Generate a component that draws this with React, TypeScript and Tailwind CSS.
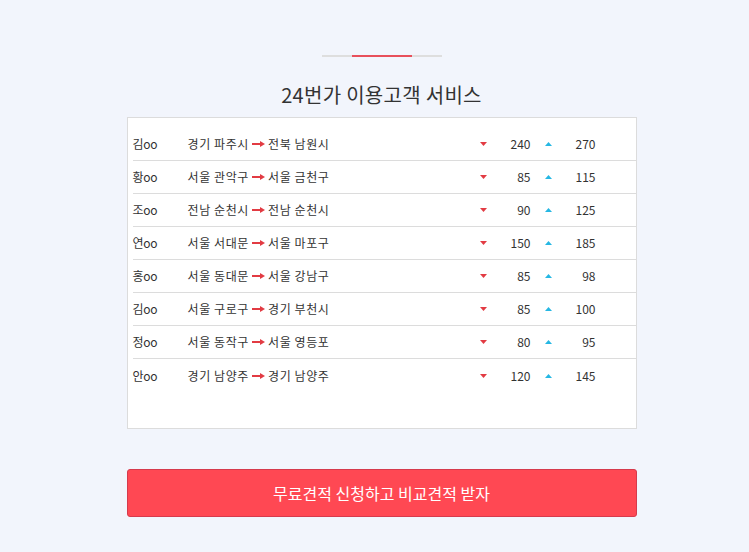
const rows = [
  { name: '김oo', from: '경기 파주시', to: '전북 남원시', low: 240, high: 270 },
  { name: '황oo', from: '서울 관악구', to: '서울 금천구', low: 85, high: 115 },
  { name: '조oo', from: '전남 순천시', to: '전남 순천시', low: 90, high: 125 },
  { name: '연oo', from: '서울 서대문', to: '서울 마포구', low: 150, high: 185 },
  { name: '홍oo', from: '서울 동대문', to: '서울 강남구', low: 85, high: 98 },
  { name: '김oo', from: '서울 구로구', to: '경기 부천시', low: 85, high: 100 },
  { name: '정oo', from: '서울 동작구', to: '서울 영등포', low: 80, high: 95 },
  { name: '안oo', from: '경기 남양주', to: '경기 남양주', low: 120, high: 145 },
];

function RouteArrow() {
  return (
    <svg width="13" height="8" viewBox="0 0 13 8" className="ml-[3px] mr-[3px] shrink-0">
      <line x1="0" y1="4" x2="9" y2="4" stroke="#e23b43" strokeWidth="2" />
      <polygon points="8,1 13,4 8,7" fill="#e23b43" />
    </svg>
  );
}

export default function App() {
  return (
    <div
      className="min-h-[552px] w-full bg-[#f2f5fc] flex flex-col items-center pl-[14px] text-[#333]"
      style={{ fontFamily: '"Noto Sans CJK KR", "Noto Sans", sans-serif' }}
    >
      {/* Divider */}
      <div className="mt-[55px] w-[120px] h-[2px] bg-[#dedede] flex justify-center">
        <div className="w-[60px] h-[2px] bg-[#e8505b]" />
      </div>

      <h2 className="mt-[24px] text-[20px] leading-[28px] tracking-[0.3px] text-[#333]">24번가 이용고객 서비스</h2>

      {/* List */}
      <div className="mt-[8px] w-[510px] h-[312px] bg-white border border-[#dcdcdc] pt-[10px] pl-[5px]">
        {rows.map((r, i) => (
          <div
            key={i}
            className={`flex items-center h-[33px] text-[12px] ${i < rows.length - 1 ? 'border-b border-[#dcdcdc]' : ''}`}
          >
            <div className="w-[55px] tracking-[-0.3px]">{r.name}</div>
            <div className="w-[292px] flex items-center tracking-[0.6px]">
              <span>{r.from}</span>
              <RouteArrow />
              <span>{r.to}</span>
            </div>
            <svg width="7" height="4" viewBox="0 0 7 4" className="shrink-0">
              <polygon points="0,0 7,0 3.5,4" fill="#e23b43" />
            </svg>
            <div className="w-[44px] text-right">{r.low}</div>
            <svg width="7" height="4" viewBox="0 0 7 4" className="ml-[14px] shrink-0">
              <polygon points="0,4 7,4 3.5,0" fill="#26b7e3" />
            </svg>
            <div className="w-[44px] text-right">{r.high}</div>
          </div>
        ))}
      </div>

      <button className="mt-[40px] w-[510px] h-[48px] rounded-[3px] bg-[#ff4853] border border-[#d63a4c] text-white text-[16px]">
        무료견적 신청하고 비교견적 받자
      </button>
    </div>
  );
}
